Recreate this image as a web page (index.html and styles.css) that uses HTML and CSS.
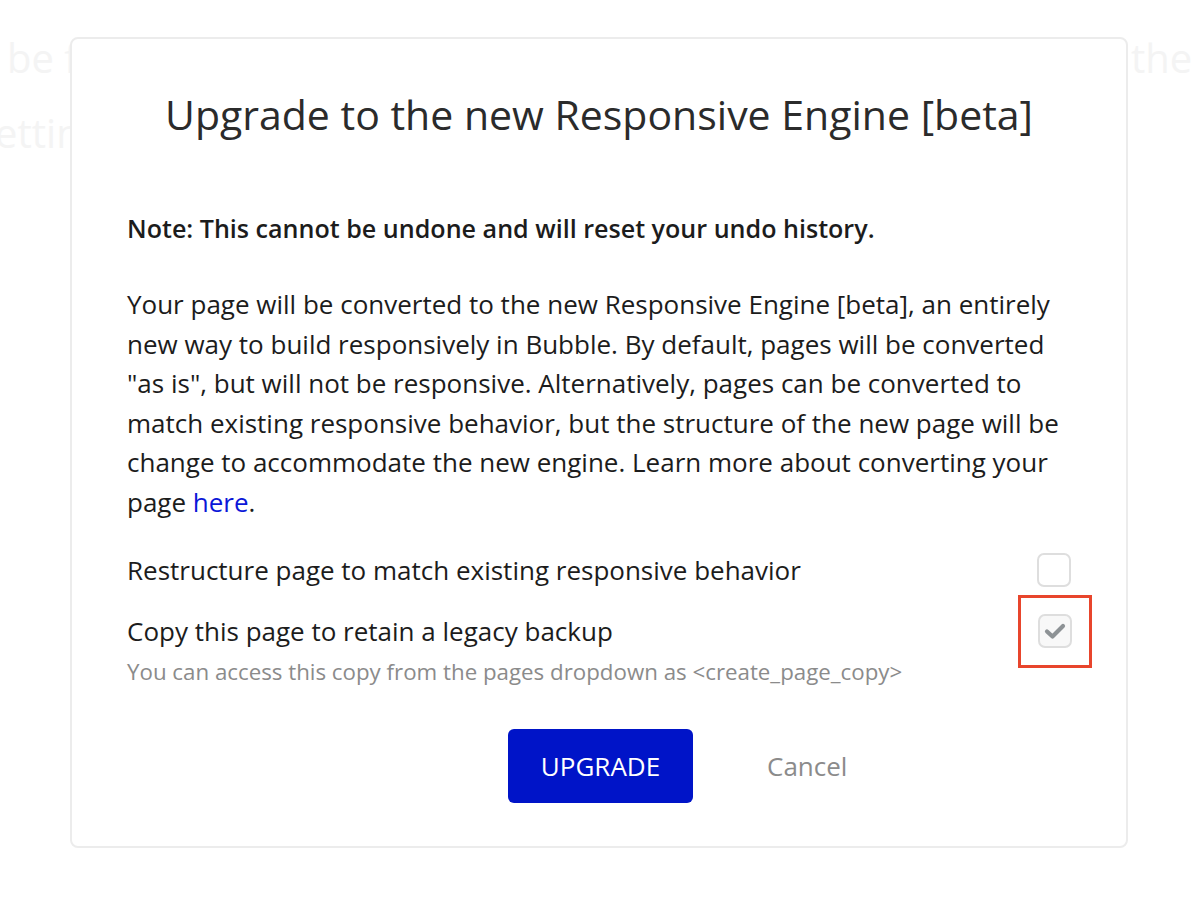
FILE: index.html
```html
<!DOCTYPE html>
<html lang="en">
<head>
    <meta charset="UTF-8">
    <title>Upgrade to the new Responsive Engine</title>
    <link rel="stylesheet" href="styles.css">
</head>
<body>
    <div class="backdrop">
        <div class="backdrop-line first">
            <span>be found on this page and</span>
            <span>the page</span>
        </div>
        <div class="backdrop-line second">
            <span>settings</span>
        </div>
    </div>

    <div class="modal">
        <h1>Upgrade to the new Responsive Engine [beta]</h1>

        <p class="note">Note: This cannot be undone and will reset your undo history.</p>

        <p class="body-text">Your page will be converted to the new Responsive Engine [beta], an entirely new way to build responsively in Bubble. By default, pages will be converted "as is", but will not be responsive. Alternatively, pages can be converted to match existing responsive behavior, but the structure of the new page will be change to accommodate the new engine. Learn more about converting your page <a href="#">here</a>.</p>

        <div class="option">
            <span class="option-label">Restructure page to match existing responsive behavior</span>
            <span class="checkbox"></span>
        </div>

        <div class="option option-copy">
            <span class="option-label">Copy this page to retain a legacy backup</span>
            <span class="highlight">
                <span class="checkbox checked">
                    <svg width="22" height="18" viewBox="0 0 22 18">
                        <path d="M3 9.5 L8.5 14.5 L19 4" fill="none" stroke="#8d9295" stroke-width="4.2" stroke-linecap="round" stroke-linejoin="round"/>
                    </svg>
                </span>
            </span>
        </div>
        <p class="hint">You can access this copy from the pages dropdown as &lt;create_page_copy&gt;</p>

        <div class="actions">
            <button class="btn-upgrade">UPGRADE</button>
            <button class="btn-cancel">Cancel</button>
        </div>
    </div>
</body>
</html>
```

FILE: styles.css
```css
body {
    font-family: 'Open Sans', 'Liberation Sans', sans-serif;
    margin: 0;
    padding: 0;
    background: #ffffff;
    color: #1c1c1c;
    overflow: hidden;
    height: 917px;
    position: relative;
}

.backdrop {
    color: #f4f4f4;
    font-size: 40px;
    line-height: 75px;
    padding-top: 20px;
    white-space: nowrap;
    overflow: hidden;
}

.backdrop-line.first {
    display: grid;
    grid-template-columns: 1124px auto;
    padding-left: 7px;
}

.backdrop-line.second {
    margin-left: -24px;
}

.modal {
    position: absolute;
    top: 37px;
    left: 70px;
    width: 944px;
    height: 807px;
    padding: 0 55px;
    background: #ffffff;
    border: 2px solid #ececec;
    border-radius: 8px;
}

h1 {
    font-weight: 400;
    font-size: 41px;
    color: #2b2b2b;
    text-align: center;
    margin: 47px 0 0;
    line-height: 56px;
}

.note {
    font-weight: 600;
    font-size: 25.1px;
    margin: 66px 0 0;
    line-height: 40px;
}

.body-text {
    font-size: 26px;
    line-height: 39.5px;
    margin: 37px 0 0;
}

.body-text a {
    color: #0b17d8;
    text-decoration: none;
}

.option {
    display: flex;
    justify-content: space-between;
    align-items: center;
    font-size: 26px;
    margin-top: 28px;
    height: 40px;
}

.option-copy {
    margin-top: 21px;
}

.checkbox {
    display: flex;
    align-items: center;
    justify-content: center;
    width: 30px;
    height: 30px;
    border: 2px solid #dedede;
    border-radius: 7px;
    background: #ffffff;
}

.checkbox.checked {
    background: #f8f8f8;
}

.highlight {
    display: flex;
    align-items: center;
    justify-content: center;
    width: 68px;
    height: 67px;
    border: 3px solid #e8452c;
    margin-right: -21px;
}

.hint {
    font-size: 22.3px;
    color: #8b8b8b;
    margin: 6px 0 0;
    line-height: 30px;
}

.actions {
    display: grid;
    grid-template-columns: 1fr auto 1fr;
    align-items: center;
    margin-top: 42px;
    padding-left: 3px;
}

.btn-upgrade {
    grid-column: 2;
    font-family: inherit;
    font-size: 26px;
    color: #ffffff;
    background: #0014c8;
    border: none;
    border-radius: 6px;
    width: 185px;
    height: 74px;
    cursor: pointer;
}

.btn-cancel {
    justify-self: start;
    margin-left: 74px;
    font-family: inherit;
    font-size: 26px;
    color: #8b8b8b;
    background: none;
    border: none;
    padding: 0;
    cursor: pointer;
}
```
